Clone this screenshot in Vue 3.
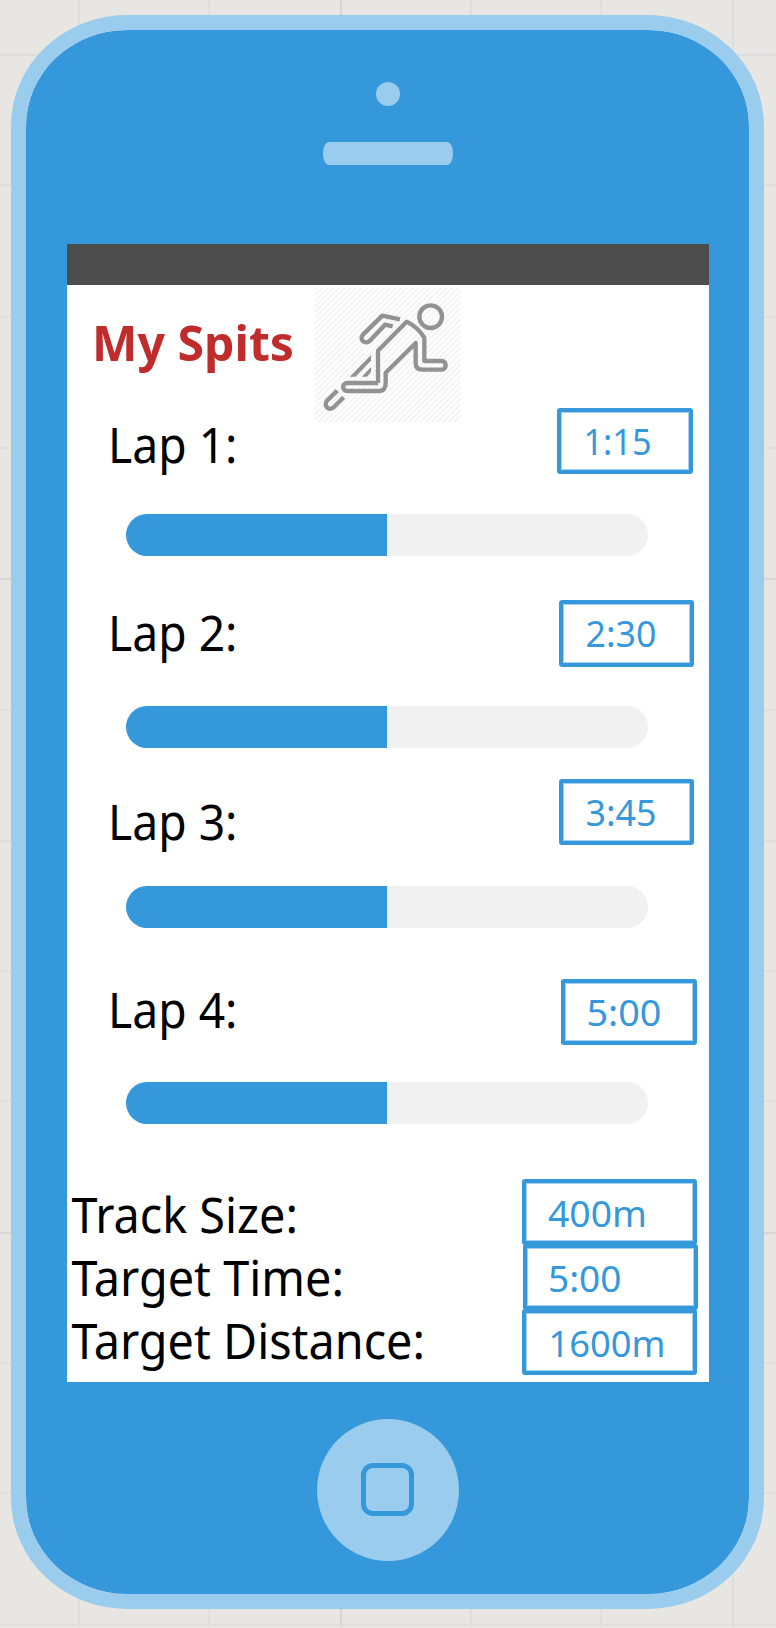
<script setup>
const verticals = [78, 208, 340, 470, 600, 732]
const horizontals = [54, 184, 316, 447, 578, 709, 840, 970, 1100, 1232, 1362, 1492, 1624]

const laps = [
  { label: 'Lap 1:', labelWidth: 129.5, time: '1:15', x: 22.5, width: 68 },
  { label: 'Lap 2:', labelWidth: 129.5, time: '2:30', x: 22.5, width: 71 },
  { label: 'Lap 3:', labelWidth: 129.5, time: '3:45', x: 22.5, width: 71 },
  { label: 'Lap 4:', labelWidth: 129.5, time: '5:00', x: 21.5, width: 75 },
]

const totals = [
  { label: 'Track Size:', labelWidth: 226.5, value: '400m', x: 22, width: 99 },
  { label: 'Target Time:', labelWidth: 272.5, value: '5:00', x: 21, width: 73.5 },
  { label: 'Target Distance:', labelWidth: 353.5, value: '1600m', x: 22.5, width: 117 },
]
</script>

<template>
  <div class="canvas">
    <svg class="grid-lines" width="776" height="1628" aria-hidden="true">
      <rect v-for="x in verticals" :key="'v' + x" :x="x" y="0" width="2" height="1628" :class="{ strong: x === 340 }" />
      <rect v-for="y in horizontals" :key="'h' + y" x="0" :y="y" width="776" height="2" :class="{ strong: y === 578 || y === 1232 }" />
    </svg>

    <div class="phone">
      <div class="camera"></div>
      <div class="speaker"></div>

      <main class="screen">
        <div class="status"></div>

        <header class="title-row">
          <svg class="title" width="204" height="60">
            <text x="1" y="46" textLength="202" lengthAdjust="spacingAndGlyphs">My Spits</text>
          </svg>
          <svg class="runner" width="148" height="137" viewBox="44 48 444 411" aria-hidden="true">
            <defs>
              <pattern id="hatch" width="17" height="17" patternUnits="userSpaceOnUse">
                <path d="M-3 3 3 -3M-3 20 20 -3M14 20 20 14" stroke="#f2f2f2" stroke-width="5.5" />
              </pattern>
            </defs>
            <rect x="43" y="54" width="438" height="402" fill="url(#hatch)" />
            <g transform="translate(-2 1)">
              <g fill="none" stroke="#929292" stroke-width="13" stroke-linejoin="round">
                <circle cx="393" cy="139" r="34" />
                <path d="M301 147 248 136 190 193C177 207 196 225 211 211L256 163 279 168" />
                <path d="M235 338V241L321 154Q354 170 374 202V272H426C442 272 442 298 426 298H368Q348 298 348 278V218L258 307V338Q258 362 238 362H143C126 362 126 338 143 338H235" />
                <path d="M113 361 83 390C69 405 88 425 103 410L132 381" />
              </g>
              <g fill="#929292">
                <path d="M150 319 214 254V271L168 319Z" />
                <path d="M186 319 214 290V305L202 319Z" />
              </g>
            </g>
          </svg>
        </header>

        <section v-for="(lap, i) in laps" :key="lap.label" class="lap" :class="'lap-' + (i + 1)">
          <svg class="label" width="140" height="80">
            <text x="1" y="63.3" :textLength="lap.labelWidth" lengthAdjust="spacingAndGlyphs">{{ lap.label }}</text>
          </svg>
          <div class="box">
            <svg class="value" width="100" height="58">
              <text :x="lap.x" y="43.2" :textLength="lap.width" lengthAdjust="spacingAndGlyphs">{{ lap.time }}</text>
            </svg>
          </div>
          <div class="bar"><div class="fill"></div></div>
        </section>

        <section class="totals">
          <div class="names">
            <svg v-for="t in totals" :key="t.label" class="label" width="360" height="63">
              <text x="0.5" y="49.2" :textLength="t.labelWidth" lengthAdjust="spacingAndGlyphs">{{ t.label }}</text>
            </svg>
          </div>
          <div class="amounts">
            <div v-for="t in totals" :key="t.label" class="box">
              <svg class="value" width="150" height="58">
                <text :x="t.x" y="43.5" :textLength="t.width" lengthAdjust="spacingAndGlyphs">{{ t.value }}</text>
              </svg>
            </div>
          </div>
        </section>
      </main>

      <div class="home"><div class="home-mark"></div></div>
    </div>
  </div>
</template>

<style>
body {
  margin: 0;
  background: #e8e6e2;
}
</style>

<style scoped>
.canvas {
  display: grid;
  width: 776px;
  height: 1628px;
  overflow: hidden;
  background: #e8e6e2;
}
.grid-lines,
.phone {
  grid-area: 1 / 1;
}
.grid-lines rect {
  fill: #dfdedc;
}
.grid-lines rect.strong {
  fill: #d7d6d6;
}
.phone {
  box-sizing: border-box;
  width: 753px;
  height: 1594px;
  margin: 15px 0 0 11px;
  border: 15px solid #9acced;
  border-radius: 116px / 111px;
  background: #3598db;
  background-clip: padding-box;
  display: flex;
  flex-direction: column;
  align-items: center;
}
.camera {
  width: 24px;
  height: 24px;
  margin-top: 51.5px;
  border-radius: 50%;
  background: #9acced;
}
.speaker {
  width: 130px;
  height: 23px;
  margin-top: 36.5px;
  border-radius: 6px / 12px;
  background: #9acced;
}
.screen {
  width: 642px;
  height: 1137.5px;
  margin-top: 79px;
  background: #fff;
  display: flex;
  flex-direction: column;
  flex: none;
}
.status {
  height: 40.5px;
  background: #4d4d4d;
  flex: none;
}
.title-row {
  display: flex;
  height: 115.5px;
  flex: none;
}
svg {
  display: block;
  overflow: visible;
  flex: none;
}
text {
  font-family: "Noto Sans", "Open Sans", sans-serif;
}
.title {
  margin: 30px 0 0 24.5px;
}
.title text {
  font-size: 49px;
  font-weight: 700;
  fill: #c02b2b;
}
.runner {
  margin: 1px 0 0 19.5px;
}
.label text {
  font-size: 48.5px;
  fill: #000;
}
.value text {
  font-size: 37px;
  fill: #3598db;
}
.lap {
  display: grid;
  align-items: start;
  height: 188.4px;
  flex: none;
}
.lap > * {
  grid-area: 1 / 1;
}
.lap .label {
  margin-left: 40.5px;
}
.box {
  box-sizing: border-box;
  border: 4px solid #3598db;
  border-radius: 3px;
  box-shadow: inset 0 0 0 1px rgba(53, 152, 219, 0.45);
}
.lap .box {
  justify-self: end;
  width: 135px;
  height: 66.5px;
}
.lap-1 .box { width: 136px; margin: 7.7px 15.5px 0 0; }
.lap-2 .box { margin: 12px 15px 0 0; }
.lap-3 .box { margin: 2.2px 15px 0 0; }
.lap-4 .box { width: 136px; margin: 13.8px 11.5px 0 0; }
.bar {
  width: 522px;
  height: 42px;
  margin-left: 59.4px;
  border-radius: 21px;
  background: #f1f1f1;
  overflow: hidden;
}
.lap-1 .bar { margin-top: 114px; }
.lap-2 .bar { margin-top: 117.6px; }
.lap-3 .bar { margin-top: 109.7px; }
.lap-4 .bar { margin-top: 116.5px; }
.fill {
  width: 50%;
  height: 100%;
  background: #3598db;
}
.totals {
  display: flex;
  justify-content: space-between;
  padding: 25px 11.6px 0 4.5px;
}
.names {
  display: flex;
  flex-direction: column;
  padding-top: 5.4px;
}
.amounts .box {
  width: 175px;
  height: 66px;
  margin-bottom: -1px;
}
.amounts .box:nth-child(2) {
  margin-left: 1px;
  margin-right: -1px;
}
.home {
  width: 142px;
  height: 142px;
  margin-top: 37px;
  border-radius: 50%;
  background: #9acced;
  display: flex;
  align-items: center;
  justify-content: center;
  flex: none;
}
.home-mark {
  box-sizing: border-box;
  width: 53px;
  height: 53px;
  border: 5px solid #3598db;
  border-radius: 12px;
}
</style>
